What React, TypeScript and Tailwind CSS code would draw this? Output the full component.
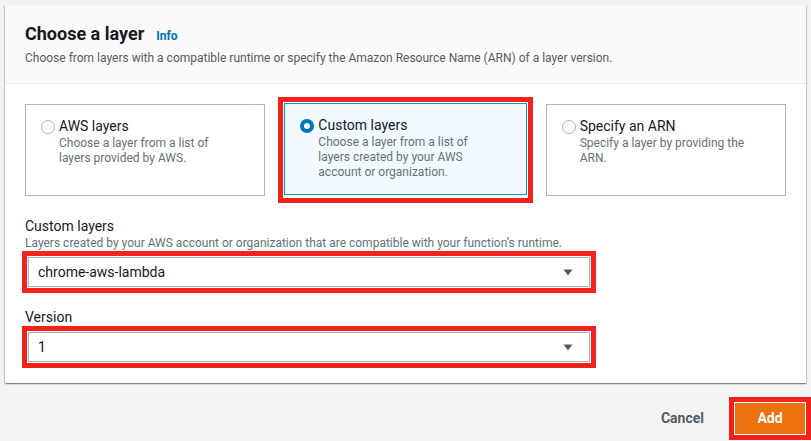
import { useState } from "react";

type Option = { id: string; title: string; desc: string };

const options: Option[] = [
  { id: "aws", title: "AWS layers", desc: "Choose a layer from a list of layers provided by AWS." },
  {
    id: "custom",
    title: "Custom layers",
    desc: "Choose a layer from a list of layers created by your AWS account or organization.",
  },
  { id: "arn", title: "Specify an ARN", desc: "Specify a layer by providing the ARN." },
];

function Caret() {
  return (
    <svg width="10" height="7" viewBox="0 0 10 7" className="shrink-0">
      <path d="M0.5 0.5h9L5 6.5z" fill="#545b64" />
    </svg>
  );
}

// red annotation box drawn around the highlighted controls
function Highlight({ children, className = "" }: { children: React.ReactNode; className?: string }) {
  return <div className={`border-[5px] border-[#f5221b] bg-white p-px ${className}`}>{children}</div>;
}

function SelectBox({ value }: { value: string }) {
  return (
    <div className="flex h-[30px] items-center justify-between border border-[#aab7b8] bg-white pl-[9px] pr-[16px] text-[14px] text-[#16191f]">
      <span>{value}</span>
      <Caret />
    </div>
  );
}

export default function App() {
  const [selected, setSelected] = useState("custom");

  return (
    <div
      className="w-[811px] h-[441px] overflow-hidden bg-[#f2f3f3] pl-[5px] pt-[5px]"
      style={{ fontFamily: "Roboto, 'Open Sans', Arial, sans-serif" }}
    >
      <div className="w-[801px] bg-white shadow-[0_1px_1px_0_rgba(0,28,36,0.3),1px_1px_1px_0_rgba(0,28,36,0.15),-1px_1px_1px_0_rgba(0,28,36,0.15)]">
        {/* header */}
        <div className="h-[79px] border-b border-[#eaeded] bg-[#fafafa] px-5 pt-[18px]">
          <div className="flex items-baseline gap-[12px]">
            <h2 className="text-[18px] font-bold leading-[22px] text-[#16191f]">Choose a layer</h2>
            <a className="text-[12px] font-bold text-[#0073bb]">Info</a>
          </div>
          <p className="mt-[5px] text-[12px] leading-[16px] text-[#545b64]">
            Choose from layers with a compatible runtime or specify the Amazon Resource Name (ARN) of a layer version.
          </p>
        </div>

        {/* body */}
        <div className="px-5 pt-5 pb-[15px]">
          <div className="grid grid-cols-3 gap-5">
            {options.map((o) => {
              const active = o.id === selected;
              const card = (
                <button
                  onClick={() => setSelected(o.id)}
                  className={`flex h-[92px] w-full items-start gap-[4px] border pl-[15px] pr-[24px] pt-[11px] text-left ${
                    active ? "border-[#00a1c9] bg-[#f1faff]" : "border-[#aab7b8] bg-white"
                  }`}
                >
                  <span
                    className={`mt-[4px] h-[14px] w-[14px] shrink-0 rounded-full bg-white ${
                      active ? "border-[4px] border-[#0073bb]" : "border border-[#aab7b8]"
                    }`}
                  />
                  <span className="flex flex-col">
                    <span className="text-[14px] leading-[20px] text-[#16191f]">{o.title}</span>
                    <span className="text-[12px] leading-[15px] text-[#687078]">{o.desc}</span>
                  </span>
                </button>
              );
              return active ? (
                <div key={o.id} className="-m-[7px] border-[5px] border-[#f5221b] bg-white p-px">
                  {card}
                </div>
              ) : (
                <div key={o.id}>{card}</div>
              );
            })}
          </div>

          <div className="mt-[20px]">
            <label className="block text-[14px] leading-[20px] text-[#16191f]">Custom layers</label>
            <p className="text-[12px] leading-[14px] text-[#687078]">
              Layers created by your AWS account or organization that are compatible with your function’s runtime.
            </p>
            <Highlight className="-ml-[3px] mt-[1px] w-[574px]">
              <SelectBox value="chrome-aws-lambda" />
            </Highlight>

            <label className="mt-[15px] block text-[14px] leading-[18px] text-[#16191f]">Version</label>
            <Highlight className="-ml-[3px] w-[574px]">
              <SelectBox value="1" />
            </Highlight>
          </div>
        </div>
      </div>

      {/* footer */}
      <div className="mt-[14px] flex w-[806px] items-center justify-end gap-[25px]">
        <button className="text-[14px] font-bold text-[#545b64]">Cancel</button>
        <Highlight>
          <div className="flex h-[31px] w-[70px] items-center justify-center bg-[#ec7211] text-[14px] font-bold text-white">
            Add
          </div>
        </Highlight>
      </div>
    </div>
  );
}
